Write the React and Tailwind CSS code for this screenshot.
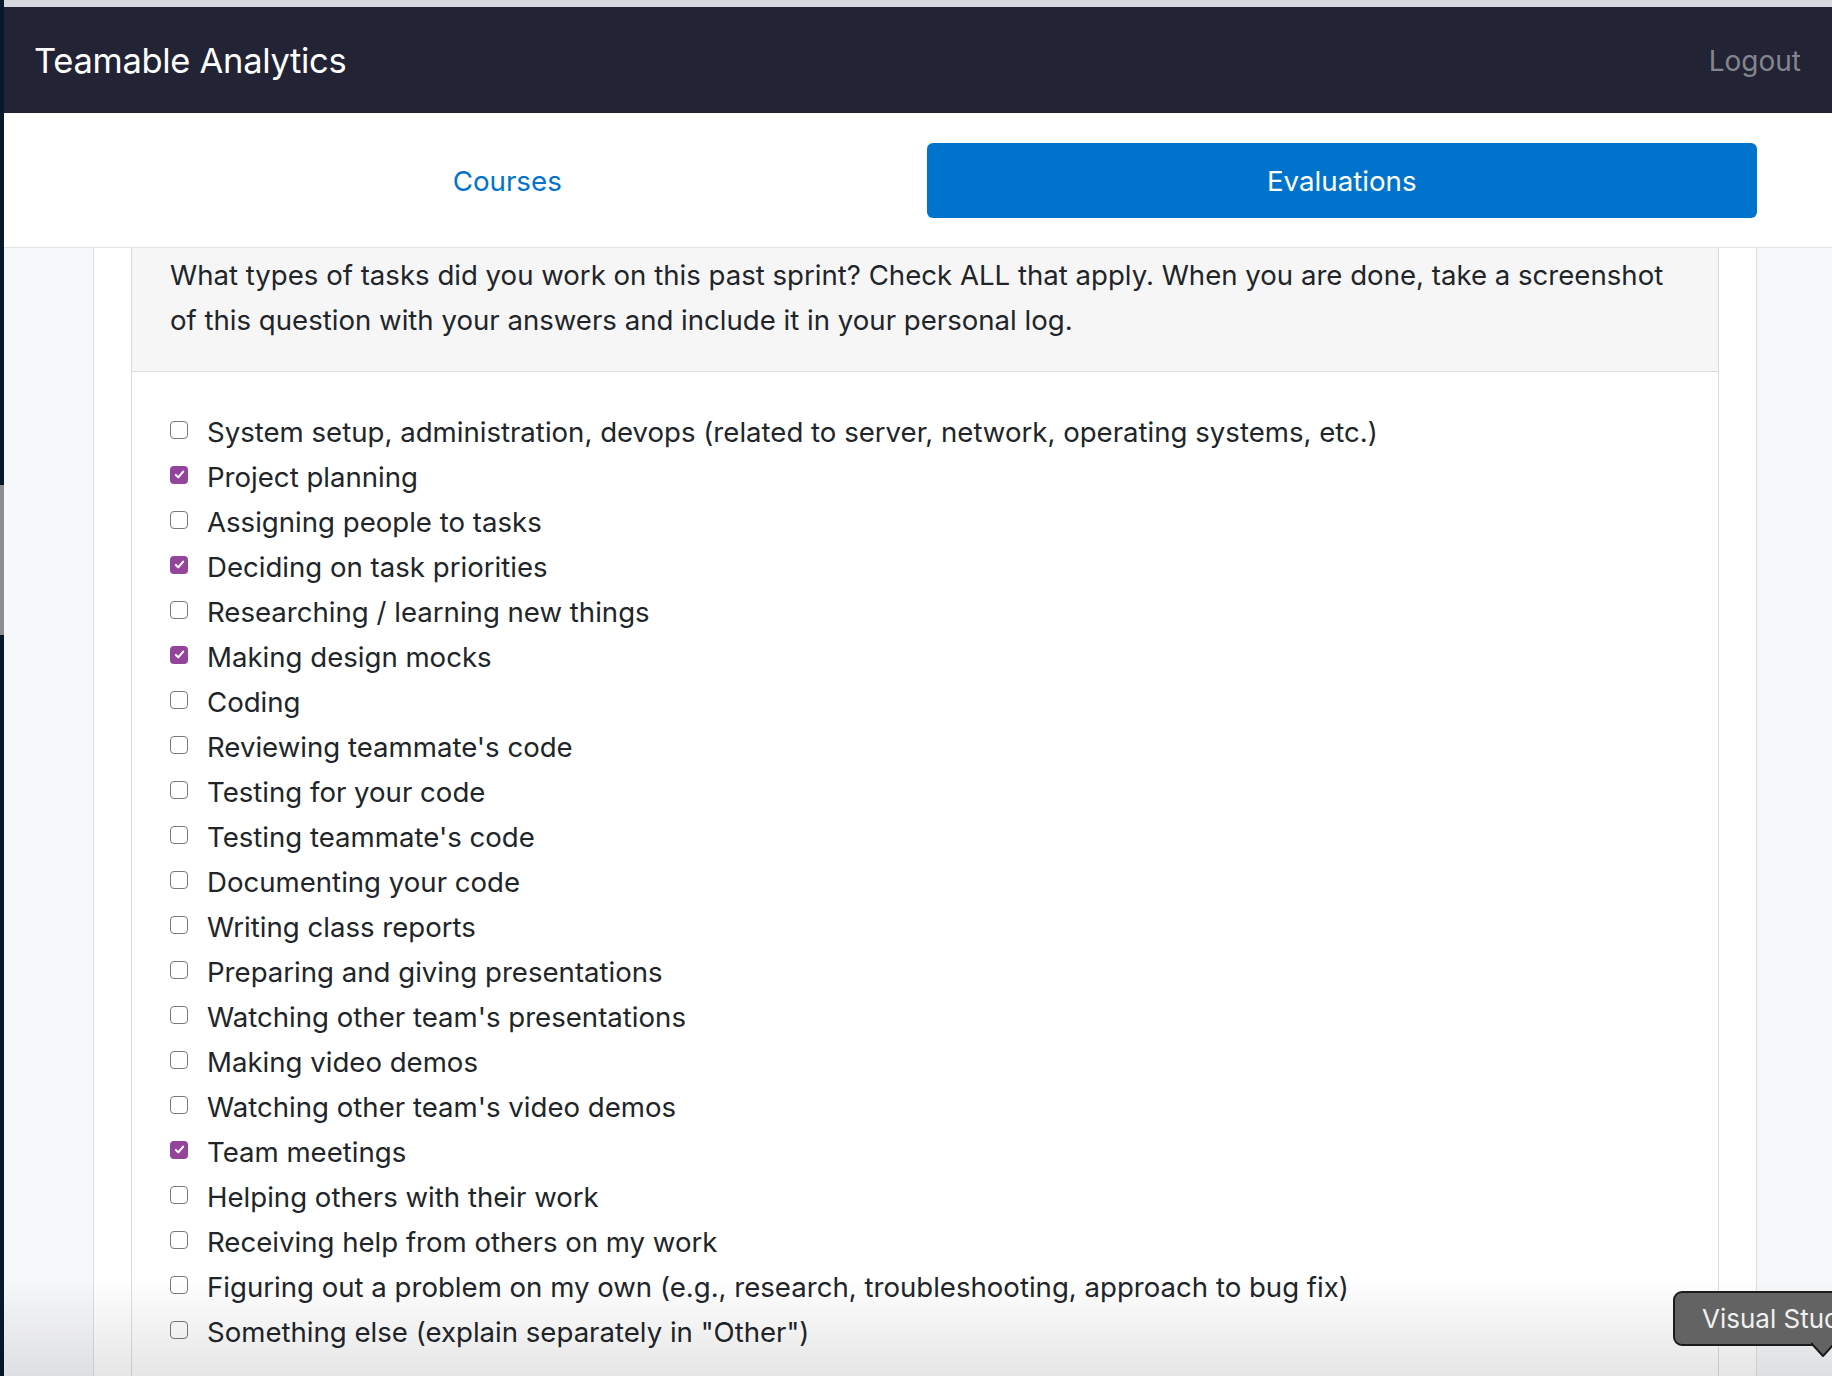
import React from 'react';

const TASKS = [
  { label: 'System setup, administration, devops (related to server, network, operating systems, etc.)', checked: false },
  { label: 'Project planning', checked: true },
  { label: 'Assigning people to tasks', checked: false },
  { label: 'Deciding on task priorities', checked: true },
  { label: 'Researching / learning new things', checked: false },
  { label: 'Making design mocks', checked: true },
  { label: 'Coding', checked: false },
  { label: "Reviewing teammate's code", checked: false },
  { label: 'Testing for your code', checked: false },
  { label: "Testing teammate's code", checked: false },
  { label: 'Documenting your code', checked: false },
  { label: 'Writing class reports', checked: false },
  { label: 'Preparing and giving presentations', checked: false },
  { label: "Watching other team's presentations", checked: false },
  { label: 'Making video demos', checked: false },
  { label: "Watching other team's video demos", checked: false },
  { label: 'Team meetings', checked: true },
  { label: 'Helping others with their work', checked: false },
  { label: 'Receiving help from others on my work', checked: false },
  { label: 'Figuring out a problem on my own (e.g., research, troubleshooting, approach to bug fix)', checked: false },
  { label: 'Something else (explain separately in "Other")', checked: false },
];

const Checkbox = ({ checked }) => {
  if (checked) {
    return (
      <span className="mt-[-6px] flex h-[18px] w-[18px] shrink-0 items-center justify-center rounded-[4px] bg-[#95449b]">
        <svg viewBox="0 0 16 16" className="h-[13px] w-[13px]" fill="none" stroke="white" strokeWidth="2.6" strokeLinecap="round" strokeLinejoin="round">
          <path d="M3.5 8.5l3 3 6-7" />
        </svg>
      </span>
    );
  }
  return <span className="mt-[-6px] h-[18px] w-[18px] shrink-0 rounded-[4px] border border-[#7a7a7a] bg-white" />;
};

const TaskItem = ({ label, checked }) => (
  <label className="flex h-[45px] items-center gap-[19px]">
    <Checkbox checked={checked} />
    <span className="whitespace-nowrap">{label}</span>
  </label>
);

export default function App() {
  return (
    <div
      className="relative flex h-[1376px] w-full overflow-hidden bg-white text-[#212529]"
      style={{ fontFamily: 'Inter, "Noto Sans", sans-serif' }}
    >
      {/* dock edge on the far left */}
      <div className="flex w-[4px] shrink-0 flex-col bg-[#061a2c]">
        <div className="mt-[485px] h-[150px] bg-[#8e8e8e]" />
      </div>

      <div className="flex flex-1 flex-col">
        <div className="h-[7px] bg-[#d8d9de]" />

        <header className="flex h-[106px] items-center justify-between bg-[#222335] pl-[30px] pr-[31px] pt-[2px]">
          <h1 className="text-[34.5px] tracking-[-0.3px] text-white">Teamable Analytics</h1>
          <button className="text-[28px] text-[#85858e]">Logout</button>
        </header>

        <nav className="flex h-[135px] items-center border-b border-[#e1e4e8] bg-white">
          <div className="ml-[88px] grid w-[1665px] grid-cols-2 gap-[4px]">
            <button className="h-[75px] rounded-[6px] pt-[3px] text-[27.7px] text-[#0074cc]">Courses</button>
            <button className="h-[75px] rounded-[6px] bg-[#0074cc] pt-[3px] text-[27.7px] text-white">Evaluations</button>
          </div>
        </nav>

        <div className="flex flex-1 bg-[#f7f8fa]">
          <div className="w-[89px] shrink-0" />
          <main className="flex w-[1664px] shrink-0 flex-col border-x border-[#dcdfe3] bg-white px-[37px]">
            <section className="flex-1 border-x border-[#dcdcdc]">
              <div className="border-b border-[#dcdcdc] bg-[#f6f6f6] pb-[28px] pl-[38px] pr-[40px] pt-[5px] text-[27.6px] leading-[45px]">
                What types of tasks did you work on this past sprint? Check ALL that apply. When you are done, take a screenshot of this question with your answers and include it in your personal log.
              </div>
              <div className="pl-[38px] pt-[38px] text-[27.6px]">
                {TASKS.map((t) => (
                  <TaskItem key={t.label} label={t.label} checked={t.checked} />
                ))}
              </div>
            </section>
          </main>
        </div>
      </div>

      {/* dock shadow */}
      <div className="pointer-events-none absolute inset-x-0 bottom-0 h-[100px] bg-gradient-to-b from-transparent to-black/10" />

      {/* dock tooltip */}
      <div className="absolute left-[1673px] top-[1291px]">
        <div className="flex h-[55px] items-center whitespace-nowrap rounded-[9px] border-2 border-[#1c1c1c] bg-[#636363] pl-[27px] pr-[20px] text-[26px] text-[#f0f0f0]">
          Visual Studio Code
        </div>
        <svg className="absolute left-[138px] top-[51px]" width="24" height="16" viewBox="0 0 24 16">
          <path d="M0 1 L12 14 L24 1" fill="#636363" stroke="#1c1c1c" strokeWidth="2" strokeLinejoin="round" />
        </svg>
      </div>
    </div>
  );
}
